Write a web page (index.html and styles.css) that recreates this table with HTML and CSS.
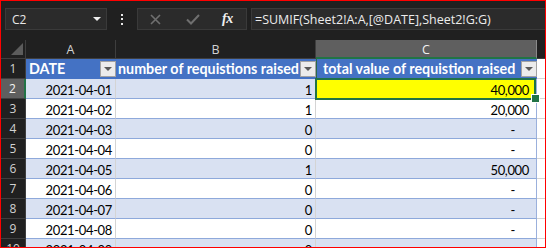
FILE: index.html
```html
<!DOCTYPE html>
<html>
<head>
<meta charset="utf-8">
<link rel="stylesheet" href="styles.css">
</head>
<body>
<div class="app">
  <div class="toolbar">
    <div class="namebox"><span>C2</span><svg width="8" height="4" viewBox="0 0 8 4"><path d="M0 0H8L4 4Z" fill="#f0f0f0"/></svg></div>
    <div class="dots"><i></i><i></i><i></i></div>
    <div class="fxbox">
      <svg class="ic-x" width="11" height="11" viewBox="0 0 11 11"><path d="M1 1L10 10M10 1L1 10" stroke="#6f6f6f" stroke-width="1.6"/></svg>
      <svg class="ic-ok" width="14" height="11" viewBox="0 0 14 11"><path d="M1 5.5L5 9.5L13 1" stroke="#6f6f6f" stroke-width="2" fill="none"/></svg>
      <span class="fx">fx</span>
    </div>
    <div class="formula">=SUMIF(Sheet2!A:A,[@DATE],Sheet2!G:G)</div>
  </div>
  <div class="sheet">
    <div class="rh corner"><svg width="12" height="12" viewBox="0 0 12 12"><path d="M12 0V12H0Z" fill="#5c5c5c"/></svg></div>
    <div class="ch">A</div>
    <div class="ch">B</div>
    <div class="ch selc">C</div>
    <div class="ch last"></div>

    <div class="rh">1</div>
    <div class="th th-a"><span>DATE</span><b class="dd"></b></div>
    <div class="th th-b"><span>number of requistions raised</span><b class="dd"></b></div>
    <div class="th th-c"><span>total value of requistion raised</span><b class="dd"></b></div>
    <div class="d"></div>

    <div class="rh selr">2</div>
    <div class="c band">2021-04-01</div>
    <div class="c band">1</div>
    <div class="c cc sel">40,000</div>
    <div class="d"></div>

    <div class="rh">3</div>
    <div class="c">2021-04-02</div>
    <div class="c">1</div>
    <div class="c cc">20,000</div>
    <div class="d"></div>

    <div class="rh">4</div>
    <div class="c band">2021-04-03</div>
    <div class="c band">0</div>
    <div class="c cc band dash">-</div>
    <div class="d"></div>

    <div class="rh">5</div>
    <div class="c">2021-04-04</div>
    <div class="c">0</div>
    <div class="c cc dash">-</div>
    <div class="d"></div>

    <div class="rh">6</div>
    <div class="c band">2021-04-05</div>
    <div class="c band">1</div>
    <div class="c cc band">50,000</div>
    <div class="d"></div>

    <div class="rh">7</div>
    <div class="c">2021-04-06</div>
    <div class="c">0</div>
    <div class="c cc dash">-</div>
    <div class="d"></div>

    <div class="rh">8</div>
    <div class="c band">2021-04-07</div>
    <div class="c band">0</div>
    <div class="c cc band dash">-</div>
    <div class="d"></div>

    <div class="rh">9</div>
    <div class="c">2021-04-08</div>
    <div class="c">0</div>
    <div class="c cc dash">-</div>
    <div class="d"></div>

    <div class="rh">10</div>
    <div class="c band">2021-04-09</div>
    <div class="c band">0</div>
    <div class="c cc band dash">-</div>
    <div class="d"></div>
  </div>
</div>
</body>
</html>
```

FILE: styles.css
```css
* { box-sizing: border-box; margin: 0; padding: 0; }
html, body { margin: 0; background: #202020; }

.app {
  width: 546px;
  height: 248px;
  border: 1px solid #ff0000;
  background: #202020;
  overflow: hidden;
  font-family: "Open Sans", sans-serif;
}

.toolbar {
  display: flex;
  height: 22px;
  margin: 7px 0 0 4px;
}

.namebox {
  width: 102px;
  background: #2b2b2b;
  border: 1px solid #3a3a3a;
  display: flex;
  align-items: center;
  justify-content: space-between;
  padding: 0 5px 0 6px;
  color: #e8e8e8;
  font-size: 12px;
}

.dots {
  width: 30px;
  display: flex;
  flex-direction: column;
  align-items: center;
  justify-content: center;
  gap: 2.5px;
}
.dots i { display: block; width: 2px; height: 2px; background: #e8e8e8; }

.fxbox {
  width: 110px;
  background: #2b2b2b;
  border: 1px solid #3a3a3a;
  display: flex;
  align-items: center;
  padding-left: 12px;
}
.ic-ok { margin-left: 25px; }
.fx {
  margin-left: 22px;
  font-family: "Liberation Serif", serif;
  font-style: italic;
  font-weight: bold;
  font-size: 14px;
  color: #f0f0f0;
  letter-spacing: -0.5px;
}

.formula {
  flex: 1;
  margin-left: 4px;
  background: #2b2b2b;
  border: 1px solid #3a3a3a;
  border-right: none;
  color: #ececec;
  font-size: 12.5px;
  padding-left: 3px;
  display: flex;
  align-items: center;
  white-space: nowrap;
}

.sheet {
  margin-top: 10px;
  display: grid;
  grid-template-columns: 25px 90px 200px 221px 1fr;
  grid-template-rows: 19px;
  grid-auto-rows: 20px;
}

.rh, .ch {
  background: #202020;
  border-right: 1px solid #3e3e3e;
  border-bottom: 1px solid #3e3e3e;
  color: #d2d2d2;
  font-size: 12px;
  display: flex;
  align-items: center;
  justify-content: center;
}
.ch { font-size: 12.5px; padding-top: 1px; }
.ch.last { border-right: none; }
.corner { align-items: flex-end; justify-content: flex-end; padding: 0 2px 3px 0; }
.selc {
  background: #5f5f5f;
  color: #f2f2f2;
  border-bottom: 2px solid #217346;
  border-right-color: #8a8a8a;
}
.selr {
  background: #5f5f5f;
  color: #f2f2f2;
  border-right: 2px solid #217346;
}

.th {
  background: #4472c4;
  color: #ffffff;
  font-family: Lato, sans-serif;
  font-weight: bold;
  font-size: 14.3px;
  display: flex;
  align-items: flex-end;
  justify-content: space-between;
  padding: 0 0 2px 3px;
  white-space: nowrap;
}
.th span { padding-bottom: 0; line-height: 16px; }
.th-b { padding-left: 2px; }
.th-c { padding-left: 7px; box-shadow: inset 1px 0 #2c6a4a; }
.dd {
  width: 16px;
  height: 16px;
  background: #ececec;
  border: 1px solid #a3a3a3;
  position: relative;
  flex: none;
}
.dd::after {
  content: "";
  position: absolute;
  left: 3px;
  top: 5px;
  border-left: 4px solid transparent;
  border-right: 4px solid transparent;
  border-top: 4px solid #5a5a5a;
}

.c {
  background: #ffffff;
  border-right: 1px solid #d4d4d4;
  border-bottom: 1px solid #8ea9db;
  color: #000000;
  font-family: Lato, sans-serif;
  font-size: 13px;
  letter-spacing: -0.35px;
  line-height: 15px;
  display: flex;
  align-items: flex-end;
  justify-content: flex-end;
  padding: 0 3px 0 0;
  white-space: nowrap;
}
.c.band { background: #d9e1f2; }
.c.cc { border-right-color: #9bb0dc; padding-right: 7px; }
.c.dash { padding-right: 21px; }
.c.sel { background: #ffff00; position: relative; }
.c.sel::after {
  content: "";
  position: absolute;
  left: -1px;
  right: 0;
  top: -1px;
  bottom: -2px;
  border: 2px solid #217346;
  z-index: 2;
}
.c.sel::before {
  content: "";
  position: absolute;
  right: -4px;
  bottom: -5px;
  width: 7px;
  height: 7px;
  background: #217346;
  border: 1px solid #ffffff;
  z-index: 3;
}

.d {
  background: #ffffff;
  border-bottom: 1px solid #d4d4d4;
}
```
